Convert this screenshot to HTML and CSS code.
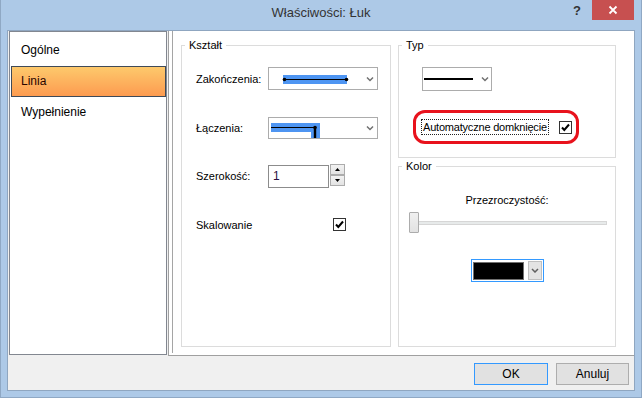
FILE: index.html
```html
<!DOCTYPE html>
<html lang="pl">
<head>
<meta charset="utf-8">
<title>Właściwości: Łuk</title>
<link rel="stylesheet" href="styles.css">
</head>
<body>
<div class="frame">
  <div class="titlebar">
    <div></div>
    <div class="title">Właściwości: Łuk</div>
    <div class="title-actions">
      <span class="help">?</span>
      <span class="close"><svg width="10" height="10" viewBox="0 0 10 10"><path d="M1.5 1.5 L8.5 8.5 M8.5 1.5 L1.5 8.5" stroke="#fff" stroke-width="1.8"/></svg></span>
    </div>
  </div>
  <div class="client">
    <div class="main">
      <ul class="nav">
        <li class="nav-item">Ogólne</li>
        <li class="nav-item selected">Linia</li>
        <li class="nav-item">Wypełnienie</li>
      </ul>
      <div class="page">
        <div class="page-inner">
          <div class="group shape">
            <span class="group-label">Kształt</span>
            <div class="row r1">
              <span class="lbl">Zakończenia:</span>
              <div class="combo wide">
                <svg width="108" height="21" viewBox="0 0 108 21">
                  <rect x="14" y="7" width="64" height="9" fill="#4e95f2"/>
                  <line x1="15" y1="11.5" x2="78" y2="11.5" stroke="#000" stroke-width="1"/>
                  <circle cx="15.5" cy="11.5" r="1.8" fill="#000"/>
                  <circle cx="77.5" cy="11.5" r="1.8" fill="#000"/>
                  <path d="M98 9.5 L101 12.5 L104 9.5" fill="none" stroke="#707070" stroke-width="1.5"/>
                </svg>
              </div>
            </div>
            <div class="row r2">
              <span class="lbl">Łączenia:</span>
              <div class="combo wide">
                <svg width="108" height="20" viewBox="0 0 108 20">
                  <rect x="2" y="5" width="49" height="9" fill="#4e95f2"/>
                  <rect x="42" y="14" width="9" height="6" fill="#4e95f2"/>
                  <line x1="2" y1="9.5" x2="46" y2="9.5" stroke="#000" stroke-width="1"/>
                  <circle cx="46" cy="9.5" r="1.8" fill="#000"/>
                  <line x1="46" y1="9.5" x2="46" y2="20" stroke="#000" stroke-width="2.4"/>
                  <path d="M98 8.5 L101 11.5 L104 8.5" fill="none" stroke="#707070" stroke-width="1.5"/>
                </svg>
              </div>
            </div>
            <div class="row r3">
              <span class="lbl">Szerokość:</span>
              <div class="spin-input">1</div>
              <div class="spin">
                <span class="spin-btn"><svg width="5" height="3" viewBox="0 0 5 3"><path d="M0 3 L2.5 0 L5 3 Z" fill="#000"/></svg></span>
                <span class="spin-btn"><svg width="5" height="3" viewBox="0 0 5 3"><path d="M0 0 L2.5 3 L5 0 Z" fill="#000"/></svg></span>
              </div>
            </div>
            <div class="row r4">
              <span class="lbl lbl-long">Skalowanie</span>
              <span class="check"><svg width="13" height="13" viewBox="0 0 13 13"><rect x="0.5" y="0.5" width="12" height="12" fill="#fff" stroke="#333"/><path d="M3 6.5 L5.3 9 L10 3.5" fill="none" stroke="#000" stroke-width="2"/></svg></span>
            </div>
          </div>
          <div class="col">
            <div class="group typ">
              <span class="group-label">Typ</span>
              <div class="combo small">
                <svg width="68" height="22" viewBox="0 0 68 22">
                  <line x1="1" y1="11" x2="50" y2="11" stroke="#000" stroke-width="2"/>
                  <path d="M59 9.5 L62 12.5 L65 9.5" fill="none" stroke="#707070" stroke-width="1.5"/>
                </svg>
              </div>
              <div class="auto">
                <span class="focus">Automatyczne domknięcie</span>
                <span class="check"><svg width="13" height="13" viewBox="0 0 13 13"><rect x="0.5" y="0.5" width="12" height="12" fill="#fff" stroke="#333"/><path d="M3 6.5 L5.3 9 L10 3.5" fill="none" stroke="#000" stroke-width="2"/></svg></span>
              </div>
            </div>
            <div class="group kolor">
              <span class="group-label">Kolor</span>
              <div class="kolor-title">Przezroczystość:</div>
              <div class="slider">
                <span class="track"></span>
                <span class="thumb"></span>
              </div>
              <div class="color-combo">
                <span class="swatch"></span>
                <span class="drop"><svg width="8" height="5" viewBox="0 0 8 5"><path d="M1 1 L4 4 L7 1" fill="none" stroke="#606060" stroke-width="1.5"/></svg></span>
              </div>
            </div>
          </div>
        </div>
      </div>
    </div>
    <div class="buttons">
      <button class="btn ok">OK</button>
      <button class="btn cancel">Anuluj</button>
    </div>
  </div>
</div>
</body>
</html>
```

FILE: styles.css
```css
* { box-sizing: border-box; }
html, body { margin: 0; padding: 0; }
body {
  width: 642px;
  height: 398px;
  overflow: hidden;
  font-family: "Liberation Sans", Arial, sans-serif;
  font-size: 11px;
  color: #000;
}
.frame {
  width: 642px;
  height: 398px;
  background: #adc9e7;
  border: 1px solid #8fa8c4;
  border-top: 0;
  display: flex;
  flex-direction: column;
}
.titlebar {
  height: 30px;
  flex: none;
  display: grid;
  grid-template-columns: 1fr auto 1fr;
  align-items: start;
}
.title {
  font-size: 13px;
  color: #333;
  padding-top: 5px;
  line-height: 16px;
}
.title-actions {
  display: flex;
  justify-content: flex-end;
  align-items: flex-start;
  padding-right: 7px;
}
.help {
  font-weight: bold;
  font-size: 13px;
  color: #333;
  margin-top: 3px;
  margin-right: 11px;
  line-height: 16px;
}
.close {
  width: 42px;
  height: 20px;
  background: #c75050;
  display: flex;
  align-items: center;
  justify-content: center;
}
.client {
  margin: 0 6px 6px 6px;
  flex: 1;
  background: #f0f0f0;
  border: 1px solid #8fa6c0;
  display: flex;
  flex-direction: column;
}
.main {
  display: flex;
  height: 325px;
  padding-left: 1px;
  gap: 1px;
}
.nav {
  width: 158px;
  height: 324px;
  margin: 0;
  padding: 3px 0 0 1px;
  list-style: none;
  background: #fff;
  border: 1px solid #828790;
  font-size: 12px;
}
.nav-item {
  height: 31px;
  line-height: 29px;
  border: 1px solid transparent;
  padding-left: 9px;
  color: #000;
}
.nav-item.selected {
  background: linear-gradient(#fdc96c, #fd9b50);
  border-color: #3f4a58;
  color: #2a0500;
}
.page {
  width: 466px;
  height: 325px;
  background: #fff;
  border-left: 1px solid #a0a0a0;
  border-bottom: 1px solid #a0a0a0;
  padding-left: 3px;
}
.page-inner {
  height: 322px;
  border-left: 1px solid #a5a5a5;
  display: flex;
  gap: 7px;
  padding: 14px 0 0 8px;
}
.group {
  position: relative;
  border: 1px solid #dcdcdc;
}
.group-label {
  position: absolute;
  top: -7px;
  left: 3px;
  padding: 0 4px;
  background: #fff;
  line-height: 13px;
}
.shape {
  width: 210px;
  height: 302px;
  padding-left: 14px;
}
.row {
  display: flex;
  align-items: center;
}
.lbl { width: 72px; }
.lbl-long { width: 137px; }
.r1 { margin-top: 21px; height: 23px; }
.r2 { margin-top: 27px; height: 22px; }
.r3 { margin-top: 25px; height: 24px; align-items: flex-start; }
.r3 .lbl { align-self: center; }
.r4 { margin-top: 30px; height: 13px; }
.combo {
  border: 1px solid #acacac;
  background: #fff;
  display: flex;
}
.combo.wide { width: 110px; height: 100%; }
.spin-input {
  margin-top: 1px;
  width: 61px;
  height: 23px;
  border: 1px solid #8c8c8c;
  padding-left: 4px;
  line-height: 21px;
  font-size: 12px;
  color: #2a1040;
}
.spin {
  display: flex;
  flex-direction: column;
  margin-left: 1px;
}
.spin-btn {
  width: 15px;
  height: 11px;
  border: 1px solid #acacac;
  background: linear-gradient(#f2f2f2, #e3e3e3);
  display: flex;
  align-items: center;
  justify-content: center;
}
.check {
  display: block;
  width: 13px;
  height: 13px;
}
.check svg { display: block; }
.col {
  display: flex;
  flex-direction: column;
  gap: 8px;
}
.typ {
  width: 218px;
  height: 113px;
}
.combo.small {
  width: 70px;
  height: 24px;
  margin: 21px 0 0 23px;
}
.auto {
  margin: 19px 0 0 14px;
  width: 166px;
  height: 34px;
  border: 3px solid #e8121c;
  border-radius: 12px;
  display: flex;
  align-items: center;
  padding: 0 4px 0 5px;
}
.focus {
  border: 1px dotted #222;
  height: 16px;
  line-height: 14px;
  padding: 0 1px;
  letter-spacing: -0.2px;
}
.auto .check { margin-left: auto; }
.kolor {
  width: 218px;
  height: 181px;
  display: flex;
  flex-direction: column;
}
.kolor-title {
  margin-top: 27px;
  text-align: center;
  line-height: 13px;
  font-size: 11px;
}
.slider {
  margin: 5px 8px 0 10px;
  height: 21px;
  display: grid;
}
.track {
  grid-area: 1 / 1;
  align-self: center;
  margin-left: 2px;
  height: 4px;
  background: #e7eaea;
  border: 1px solid #d6d6d6;
}
.thumb {
  grid-area: 1 / 1;
  justify-self: start;
  width: 10px;
  height: 21px;
  background: linear-gradient(#f0f0f0, #e2e2e2);
  border: 1px solid #acacac;
  border-radius: 1px;
}
.color-combo {
  margin: 26px auto 0;
  width: 73px;
  height: 23px;
  border: 1px solid #3399ff;
  display: flex;
  align-items: center;
  padding: 0 1px;
  background: #fff;
}
.swatch {
  width: 53px;
  height: 18px;
  background: #000;
  border: 1px solid #707070;
}
.drop {
  margin-left: 4px;
  width: 14px;
  height: 19px;
  background: #e4e4e4;
  border: 1px solid #c0c0c0;
  display: flex;
  align-items: center;
  justify-content: center;
}
.buttons {
  display: flex;
  justify-content: flex-end;
  gap: 8px;
  padding: 7px 5px 0 0;
}
.btn {
  height: 22px;
  font-family: "Liberation Sans", Arial, sans-serif;
  font-size: 12px;
  color: #000;
  background: #e1e1e1;
  border: 1px solid #adadad;
  padding: 0;
  margin: 0;
}
.btn.ok { width: 74px; border-color: #3399ff; }
.btn.cancel { width: 73px; }
```
